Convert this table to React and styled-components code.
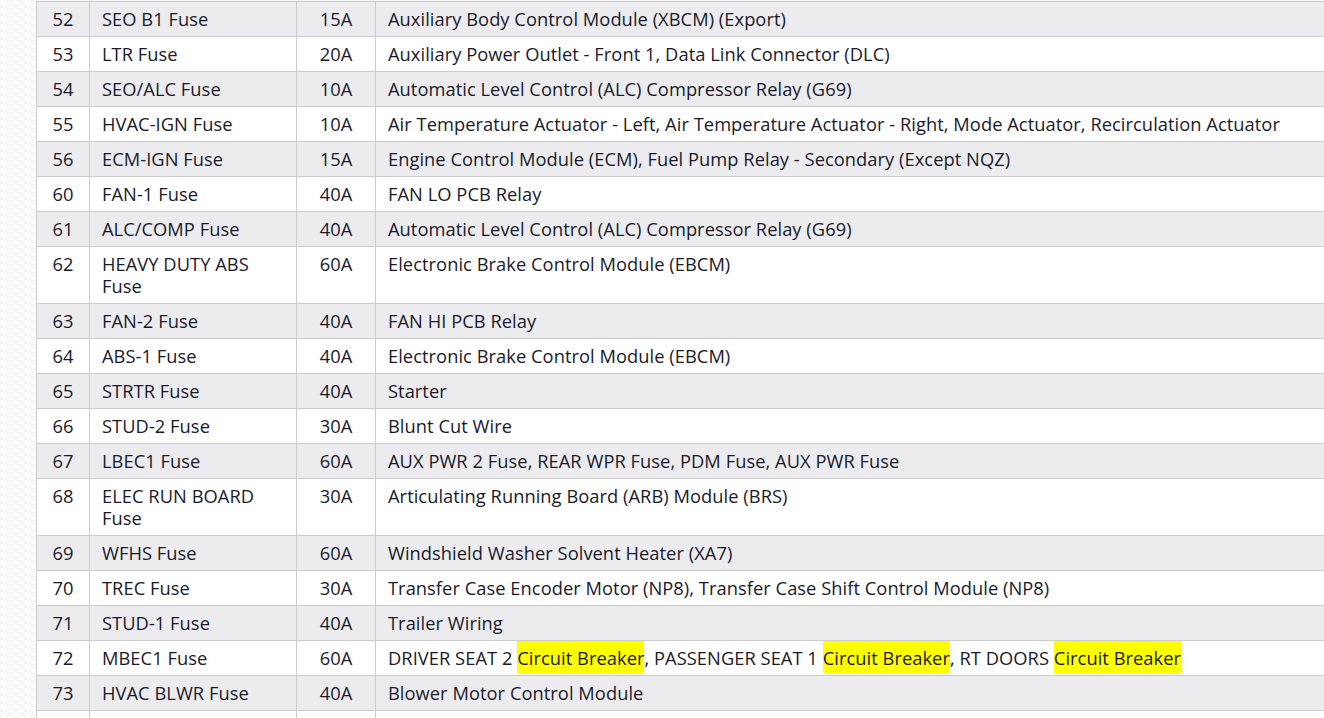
import React from 'react';
import styled, { createGlobalStyle } from 'styled-components';

const GlobalStyle = createGlobalStyle`
  html, body {
    margin: 0;
    padding: 0;
    overflow: hidden;
  }
  body {
    font-family: "Open Sans", "Noto Sans", sans-serif;
    background-color: #f7f7f7;
    background-image:
      radial-gradient(ellipse 5px 3px at 4px 3px, #ffffff 60%, transparent 70%),
      radial-gradient(ellipse 5px 3px at 10px 7px, #ffffff 60%, transparent 70%);
    background-size: 12px 8px;
  }
`;

const Page = styled.div`
  padding: 1px 0 0 36px;
  width: 1400px;
`;

const FuseTable = styled.table`
  border-collapse: collapse;
  width: 100%;
  font-size: 18.3px;
  letter-spacing: 0.05px;
  line-height: 22px;
  color: #1a1a2c;
  table-layout: fixed;
  .num { width: 53px; }
  .name { width: 207px; }
  .amp { width: 79px; }
`;

const Row = styled.tr`
  background: ${p => (p.$shaded ? '#ececee' : '#ffffff')};
`;

const Cell = styled.td`
  border: 1px solid #cccccc;
  padding: 6px 12px;
  vertical-align: top;
  text-align: ${p => p.$align || 'left'};
  white-space: nowrap;
  overflow: hidden;
  &.wrap {
    white-space: normal;
  }
`;

const Mark = styled.span`
  background: #ffff00;
  padding: 4px 0 3px;
`;

const CB = () => <Mark>Circuit Breaker</Mark>;

const rows = [
  ['52', 'SEO B1 Fuse', '15A', 'Auxiliary Body Control Module (XBCM) (Export)'],
  ['53', 'LTR Fuse', '20A', 'Auxiliary Power Outlet - Front 1, Data Link Connector (DLC)'],
  ['54', 'SEO/ALC Fuse', '10A', 'Automatic Level Control (ALC) Compressor Relay (G69)'],
  ['55', 'HVAC-IGN Fuse', '10A', 'Air Temperature Actuator - Left, Air Temperature Actuator - Right, Mode Actuator, Recirculation Actuator'],
  ['56', 'ECM-IGN Fuse', '15A', 'Engine Control Module (ECM), Fuel Pump Relay - Secondary (Except NQZ)'],
  ['60', 'FAN-1 Fuse', '40A', 'FAN LO PCB Relay'],
  ['61', 'ALC/COMP Fuse', '40A', 'Automatic Level Control (ALC) Compressor Relay (G69)'],
  ['62', 'HEAVY DUTY ABS Fuse', '60A', 'Electronic Brake Control Module (EBCM)'],
  ['63', 'FAN-2 Fuse', '40A', 'FAN HI PCB Relay'],
  ['64', 'ABS-1 Fuse', '40A', 'Electronic Brake Control Module (EBCM)'],
  ['65', 'STRTR Fuse', '40A', 'Starter'],
  ['66', 'STUD-2 Fuse', '30A', 'Blunt Cut Wire'],
  ['67', 'LBEC1 Fuse', '60A', 'AUX PWR 2 Fuse, REAR WPR Fuse, PDM Fuse, AUX PWR Fuse'],
  ['68', 'ELEC RUN BOARD Fuse', '30A', 'Articulating Running Board (ARB) Module (BRS)'],
  ['69', 'WFHS Fuse', '60A', 'Windshield Washer Solvent Heater (XA7)'],
  ['70', 'TREC Fuse', '30A', 'Transfer Case Encoder Motor (NP8), Transfer Case Shift Control Module (NP8)'],
  ['71', 'STUD-1 Fuse', '40A', 'Trailer Wiring'],
  [
    '72',
    'MBEC1 Fuse',
    '60A',
    <>
      DRIVER SEAT 2 <CB />, PASSENGER SEAT 1 <CB />, RT DOORS <CB />
    </>,
  ],
  ['73', 'HVAC BLWR Fuse', '40A', 'Blower Motor Control Module'],
  ['', '', '', ''],
];

const App = () => (
  <>
    <GlobalStyle />
    <Page>
      <FuseTable>
        <colgroup>
          <col className="num" />
          <col className="name" />
          <col className="amp" />
          <col />
        </colgroup>
        <tbody>
          {rows.map(([num, name, amp, desc], i) => (
            <Row key={i} $shaded={i % 2 === 0}>
              <Cell $align="center">{num}</Cell>
              <Cell className="wrap">{name}</Cell>
              <Cell $align="center">{amp}</Cell>
              <Cell>{desc}</Cell>
            </Row>
          ))}
        </tbody>
      </FuseTable>
    </Page>
  </>
);

export default App;
